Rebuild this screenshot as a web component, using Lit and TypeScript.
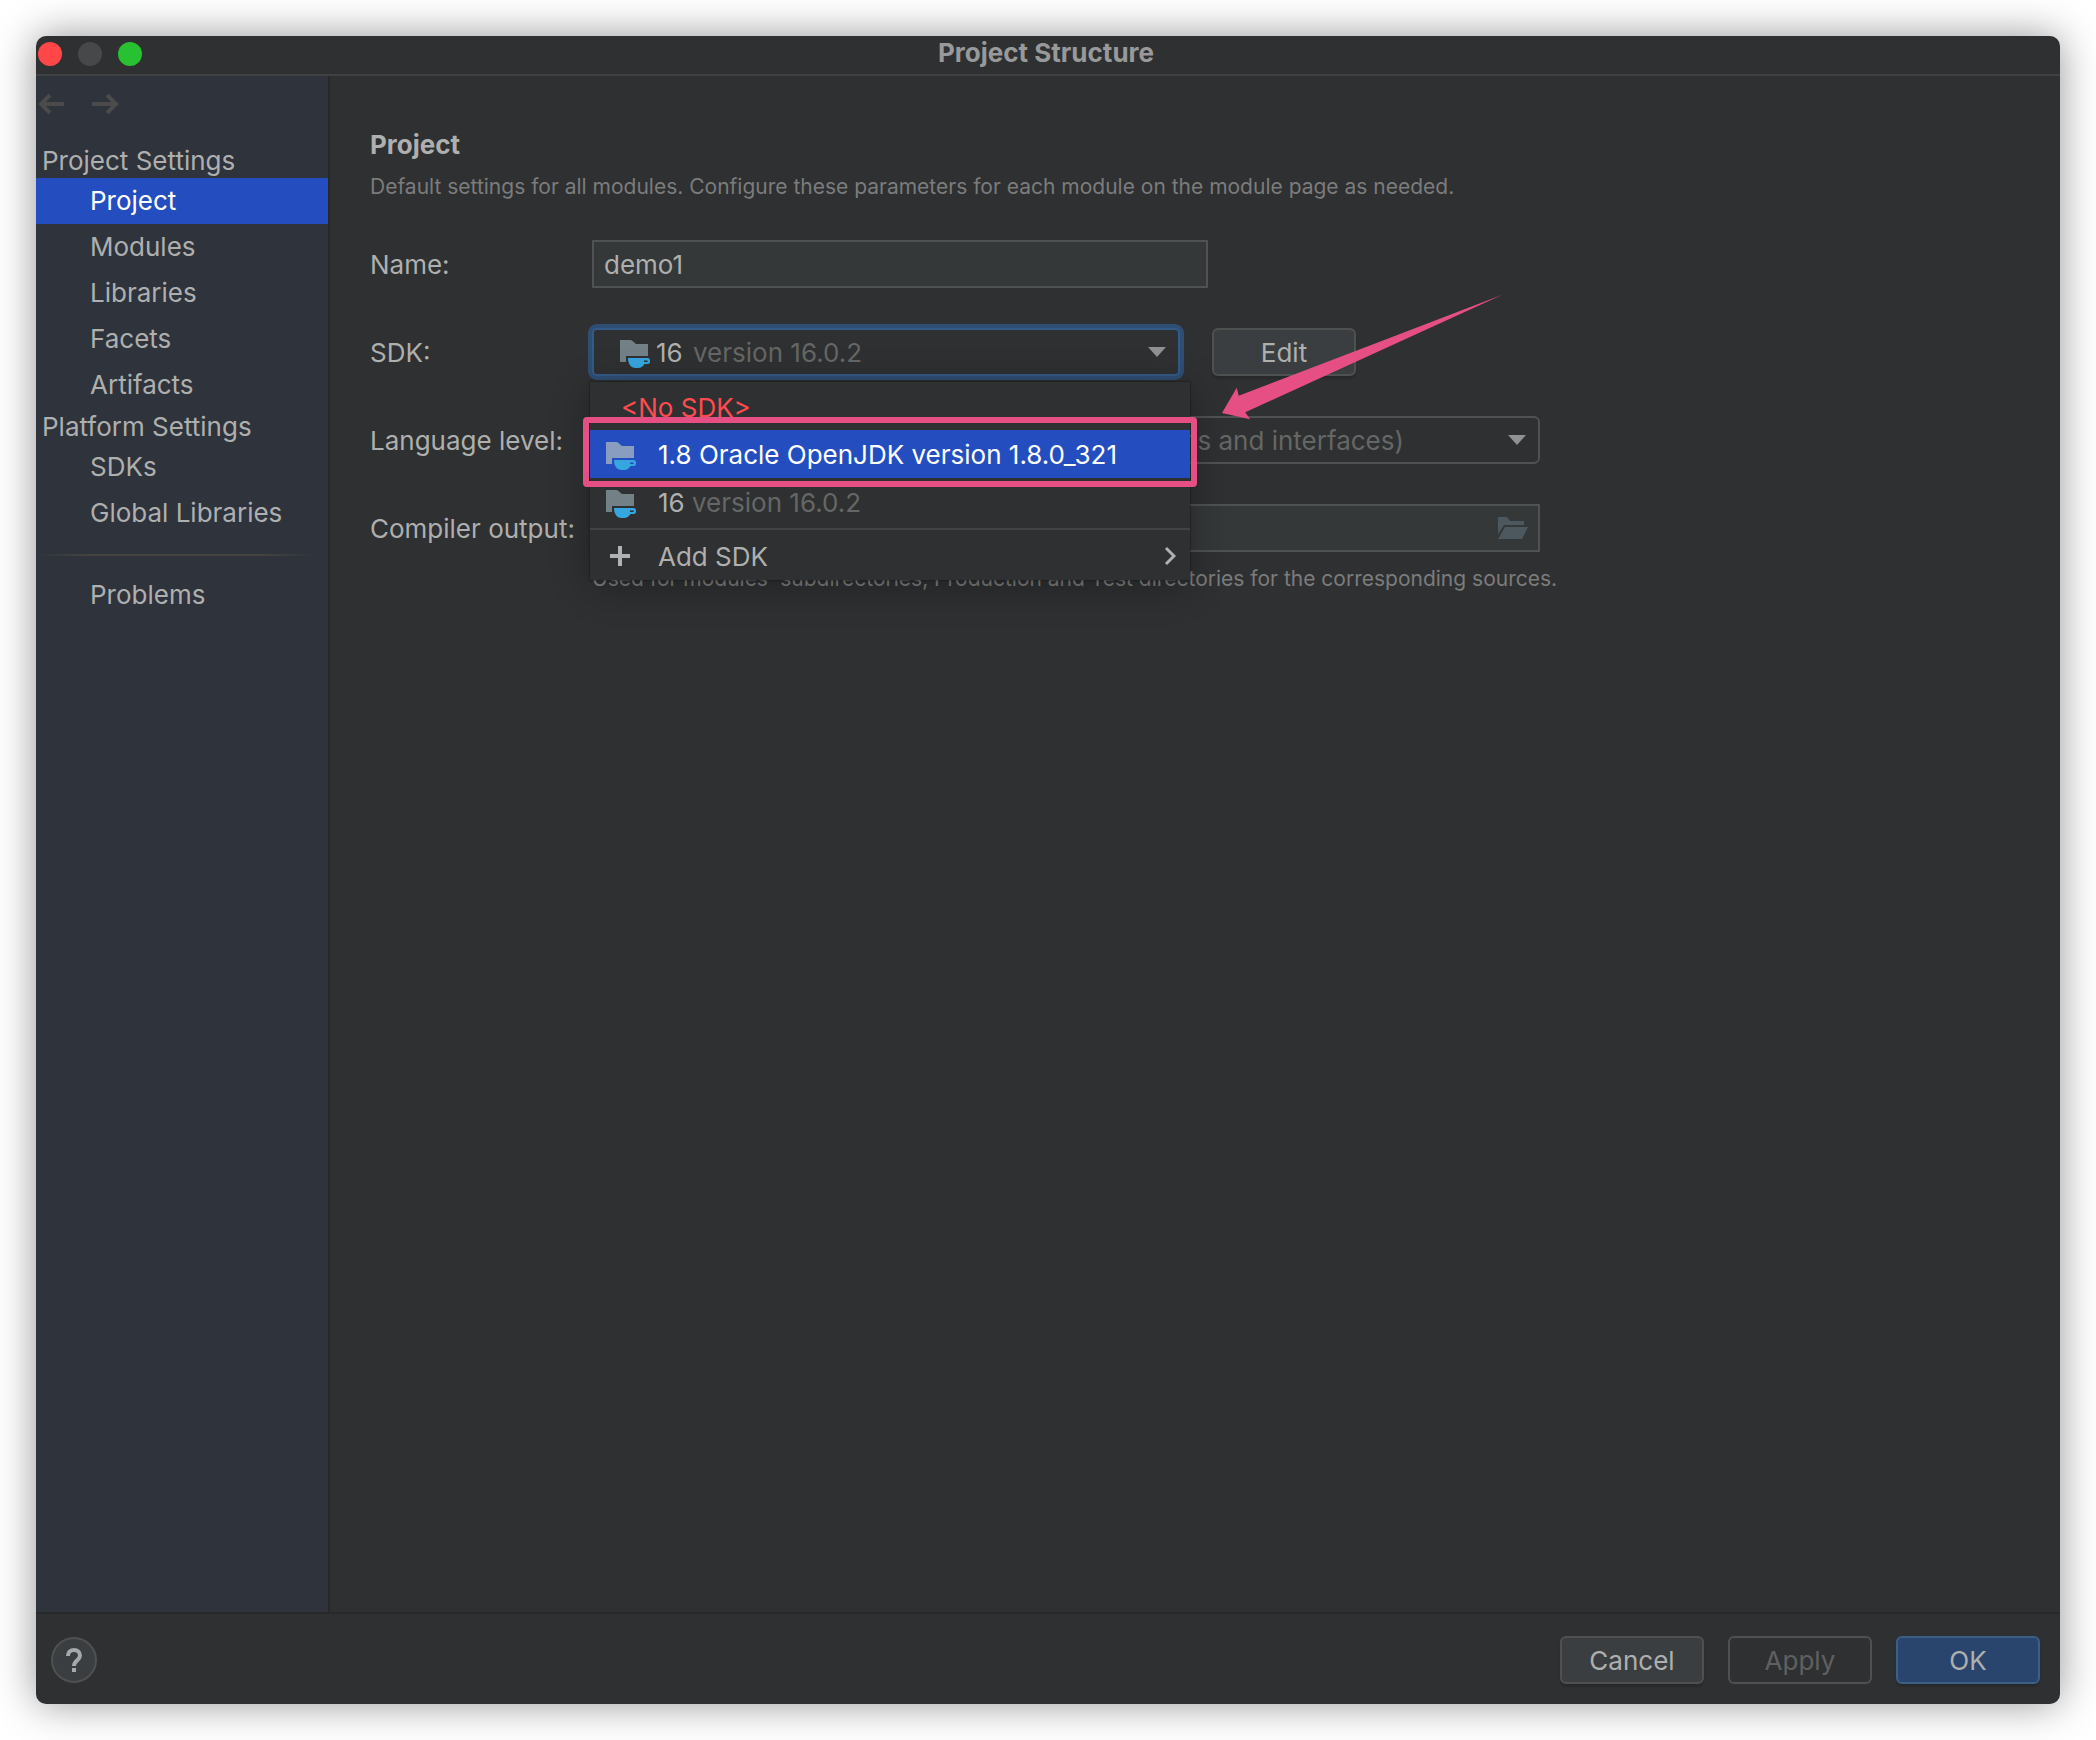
import { LitElement, html, css, svg } from "lit";
import { customElement, property, state } from "lit/decorators.js";
import { classMap } from "lit/directives/class-map.js";

@customElement("jdk-icon")
class JdkIcon extends LitElement {
  static styles = css`
    :host { display: block; width: 32px; height: 32px; flex: none; --folder: #738187; }
    svg { display: block; width: 100%; height: 100%; }
    .folder { fill: var(--folder); }
    .cup { fill: #36a6de; }
  `;
  render() {
    return html`<svg viewBox="0 0 32 32" aria-hidden="true">
      <path class="folder" d="M2 4H12Q13.5 4 14.5 5L18 8H30V20H8V26H2Z" />
      <path class="cup" fill-rule="evenodd" d="M10 22H30A2.5 2.5 0 0 1 32 24.5V25.5A2.5 2.5 0 0 1 29.5 28H26.5C25 30.8 22.5 32 20.5 32H17.5C13 32 10 28 10 22ZM26 24.5V26H29.6V24.5Z" />
    </svg>`;
  }
}

interface NavGroup {
  title: string;
  items: string[];
}

@customElement("settings-nav")
class SettingsNav extends LitElement {
  @state() private selected = "Project";

  private groups: NavGroup[] = [
    { title: "Project Settings", items: ["Project", "Modules", "Libraries", "Facets", "Artifacts"] },
    { title: "Platform Settings", items: ["SDKs", "Global Libraries"] },
  ];

  static styles = css`
    :host { display: block; background: #2f333c; border-right: 2px solid #282829; box-sizing: border-box; }
    .history { display: flex; gap: 26px; padding: 18px 0 28px 2px; }
    .history button { display: block; width: 28px; height: 20px; padding: 0; border: 0; background: none; }
    .history svg { display: block; fill: none; stroke: #4a4b4a; stroke-width: 4; }
    .title { margin: 0; padding: 2px 0 0 6px; font-size: 26px; font-weight: 400; line-height: 34px; height: 34px; }
    .item {
      display: block; width: 100%; height: 46px; padding: 0 0 0 54px; border: 0; background: none;
      color: inherit; font: inherit; text-align: left; line-height: 46px;
    }
    .item.selected { background: #244ebf; color: #fff; }
    .rule {
      height: 2px; margin: 18px 14px 16px 0; border: 0;
      background: linear-gradient(to right, transparent, #43433f 18%, #43433f 82%, transparent);
    }
  `;

  private item(name: string) {
    return html`<button class=${classMap({ item: true, selected: name === this.selected })}
      @click=${() => (this.selected = name)}>${name}</button>`;
  }

  render() {
    return html`
      <div class="history">
        <button aria-label="Back" disabled>
          <svg width="28" height="20" viewBox="0 0 28 20"><path d="M26 10H4M12 1L3 10L12 19" /></svg>
        </button>
        <button aria-label="Forward" disabled>
          <svg width="28" height="20" viewBox="0 0 28 20"><path d="M0 10H24M15 1L24 10L15 19" /></svg>
        </button>
      </div>
      <nav>
        ${this.groups.map((g) => html`<h2 class="title">${g.title}</h2>${g.items.map((i) => this.item(i))}`)}
        <hr class="rule" />
        ${this.item("Problems")}
      </nav>
    `;
  }
}

@customElement("sdk-popup")
class SdkPopup extends LitElement {
  static styles = css`
    :host {
      display: block; background: #2f3031; padding-top: 2px; box-sizing: border-box;
      box-shadow: 0 0 2px rgba(0, 0, 0, 0.6), 0 6px 36px rgba(0, 0, 0, 0.3);
    }
    .row {
      display: flex; align-items: center; gap: 22px; width: 100%; height: 48px; padding: 0 14px;
      border: 0; background: none; color: inherit; font: inherit; text-align: left; white-space: pre;
    }
    .text { padding-top: 2px; flex: 1; }
    .none { height: 46px; padding-left: 31px; color: #ff4b50; }
    .current { background: #244ebf; color: #fff; }
    .current jdk-icon { --folder: #899dc0; }
    .dim { color: #656766; }
    .rule { height: 2px; margin: 2px 0 0; border: 0; background: #424344; }
    .add { height: 50px; padding-top: 2px; }
    .add svg { display: block; fill: none; stroke: #afb1b3; stroke-width: 4; }
    .add .chevron { stroke-width: 3; }
    .frame {
      position: absolute; top: 35px; left: -7px; right: -7px; height: 70px; box-sizing: border-box;
      border: 6px solid #e64f83; border-radius: 4px; pointer-events: none;
    }
  `;
  render() {
    return html`
      <div role="listbox" aria-label="SDK list">
        <button class="row none" role="option"><span class="text">&lt;No SDK&gt;</span></button>
        <button class="row current" role="option" aria-selected="true"><jdk-icon></jdk-icon><span class="text">1.8 Oracle OpenJDK version 1.8.0_321</span></button>
        <button class="row" role="option"><jdk-icon></jdk-icon><span class="text">16 <span class="dim">version 16.0.2</span></span></button>
      </div>
      <hr class="rule" />
      <button class="row add">
        <svg width="32" height="32" viewBox="0 0 32 32" aria-hidden="true"><path d="M6 16H26M16 6V26" /></svg>
        <span class="text">Add SDK</span>
        <svg class="chevron" width="12" height="20" viewBox="0 0 12 20" aria-hidden="true"><path d="M2 2L10 10L2 18" /></svg>
      </button>
      <div class="frame"></div>
    `;
  }
}

@customElement("project-page")
class ProjectPage extends LitElement {
  @state() private name = "demo1";

  static styles = css`
    :host { display: block; padding: 53px 40px 40px; box-sizing: border-box; }
    h1 { margin: 0; font-size: 26px; line-height: 32px; font-weight: 700; }
    p { margin: 0; font-size: 21px; line-height: 28px; color: #7b7c7c; white-space: nowrap; }
    .intro { padding: 12px 0 39px; }
    .form { display: grid; grid-template-columns: 222px minmax(0, 948px); row-gap: 40px; align-items: center; }
    label { white-space: nowrap; padding-top: 2px; }
    .box {
      box-sizing: border-box; height: 48px; margin: 0; border: 2px solid #505152; background: #353839;
      color: inherit; font: inherit; outline: none; width: 100%;
    }
    .name { max-width: 616px; padding: 0 10px; }
    .sdk { display: flex; gap: 32px; position: relative; }
    .combo { display: grid; align-items: center; }
    .combo > * { grid-area: 1 / 1; }
    .combo.focus { width: 588px; }
    select.box { appearance: none; background: #2f3031; border-radius: 6px; padding: 2px 0 0; }
    .focus select.box {
      border-color: #345a87; border-radius: 5px; box-shadow: 0 0 0 4px #2f4e74; padding-left: 62px;
    }
    .adorn { display: flex; align-items: center; padding: 0 14px 0 26px; pointer-events: none; }
    .version { color: #656766; padding: 2px 0 0 43px; flex: 1; }
    .caret { display: block; fill: #8f9194; }
    .level .adorn { justify-content: flex-end; }
    .level select.box { color: #656766; padding: 2px 134px 0 10px; text-align: right; text-align-last: right; }
    .edit {
      width: 144px; height: 48px; padding: 2px 0 0; border: 2px solid #4f5151; border-radius: 6px; flex: none;
      background: #3b3e40; color: inherit; font: inherit; box-shadow: 0 3px 2px rgba(0, 0, 0, 0.15);
    }
    sdk-popup { position: absolute; z-index: 2; top: 54px; left: -2px; width: 600px; }
    .pointer { position: absolute; z-index: 3; left: 629px; top: -34px; fill: #e64f83; pointer-events: none; }
    .output { display: grid; align-items: center; }
    .output > * { grid-area: 1 / 1; }
    .browse { justify-self: end; width: 32px; height: 32px; margin-right: 12px; padding: 0; border: 0; background: none; }
    .browse svg { display: block; fill: #4d585e; }
    .hint { grid-column: 2; margin-top: -27px; }
  `;

  private caret() {
    return html`<svg class="caret" width="18" height="10" viewBox="0 0 18 10" aria-hidden="true">${svg`<path d="M0 0H18L9 10Z" />`}</svg>`;
  }

  render() {
    return html`
      <h1>Project</h1>
      <p class="intro">Default settings for all modules. Configure these parameters for each module on the module page as needed.</p>
      <div class="form">
        <label for="name">Name:</label>
        <input id="name" class="box name" .value=${this.name}
          @input=${(e: Event) => (this.name = (e.target as HTMLInputElement).value)} />

        <label for="sdk">SDK:</label>
        <div class="sdk">
          <div class="combo focus">
            <select id="sdk" class="box"><option>16</option></select>
            <span class="adorn"><jdk-icon></jdk-icon><span class="version">version 16.0.2</span>${this.caret()}</span>
          </div>
          <button class="edit">Edit</button>
          <sdk-popup></sdk-popup>
          <svg class="pointer" width="282" height="128" viewBox="1221 294 282 128" aria-hidden="true">
            <path d="M1503 294.500L1238.700 395.700L1236.700 387.700L1222 413L1250 419.300L1245.300 412.300Z" />
          </svg>
        </div>

        <label for="level">Language level:</label>
        <div class="combo level">
          <select id="level" class="box"><option>SDK default (16 - Records, patterns, local enums and interfaces)</option></select>
          <span class="adorn">${this.caret()}</span>
        </div>

        <label for="output">Compiler output:</label>
        <div class="output">
          <input id="output" class="box" />
          <button class="browse" aria-label="Browse">
            <svg width="32" height="32" viewBox="0 0 32 32"><path d="M2 5H11L14 9H28V13H8L2 22ZM9 15H32L26 27H2Z" /></svg>
          </button>
        </div>
        <p class="hint">Used for modules' subdirectories, Production and Test directories for the corresponding sources.</p>
      </div>
    `;
  }
}

@customElement("dialog-button")
class DialogButton extends LitElement {
  @property() kind = "plain";
  @property({ type: Boolean }) disabled = false;

  static styles = css`
    button {
      display: block; width: 144px; height: 48px; padding: 2px 0 0; border: 2px solid #4f5151; border-radius: 6px;
      background: #3b3e40; color: inherit; font: inherit; box-shadow: 0 3px 2px rgba(0, 0, 0, 0.15);
    }
    button:disabled { background: none; color: #5f6060; box-shadow: none; }
    .primary { background: #29456d; border-color: #3c5f85; }
  `;
  render() {
    return html`<button class=${this.kind} ?disabled=${this.disabled}><slot></slot></button>`;
  }
}

@customElement("app-root")
class AppRoot extends LitElement {
  static styles = css`
    :host {
      display: flex; box-sizing: border-box; min-height: 100vh; padding: 36px; background: #fff;
      font-family: Inter, "Liberation Sans", sans-serif; font-size: 26px; line-height: 32px; color: #aeafaf;
    }
    .window {
      flex: 1; display: flex; flex-direction: column; min-width: 0; overflow: visible;
      background: #2f3031; border-radius: 10px; box-shadow: 0 0 40px rgba(0, 0, 0, 0.42);
    }
    .titlebar {
      display: grid; grid-template-columns: 1fr auto 1fr; align-items: center; height: 40px; box-sizing: border-box;
      padding: 0 6px 2px 2px; border-bottom: 2px solid #3f4142;
    }
    .lights { display: flex; gap: 16px; }
    .light { width: 24px; height: 24px; padding: 0; border: 0; border-radius: 50%; background: #474849; }
    .close { background: #ff4747; }
    .zoom { background: #28c131; }
    .title { font-weight: 700; color: #98999a; line-height: 30px; margin-bottom: 2px; }
    .body { flex: 1; display: flex; }
    settings-nav { width: 294px; flex: none; }
    project-page { flex: 1; min-width: 0; }
    .footer {
      display: flex; align-items: center; gap: 24px; height: 92px; box-sizing: border-box;
      padding: 2px 20px 0 15px; border-top: 2px solid #272829;
    }
    .help {
      width: 46px; height: 46px; padding: 0; border: 2px solid #4f5151; border-radius: 50%;
      background: #3b3e40; margin-right: auto;
    }
    .help svg { display: block; margin: auto; fill: none; stroke: #a6a8aa; stroke-width: 4; }
    .help .dot { fill: #a6a8aa; stroke: none; }
  `;
  render() {
    return html`
      <main class="window">
        <header class="titlebar">
          <div class="lights">
            <button class="light close" aria-label="Close"></button>
            <button class="light" aria-label="Minimize" disabled></button>
            <button class="light zoom" aria-label="Zoom"></button>
          </div>
          <span class="title">Project Structure</span>
        </header>
        <div class="body">
          <settings-nav></settings-nav>
          <project-page></project-page>
        </div>
        <footer class="footer">
          <button class="help" aria-label="Help">
            <svg width="20" height="26" viewBox="0 0 20 26">
              <path d="M4 9V8.500C4 5 6.500 3 10 3S16 5 16 8.500C16 13 10 13.500 10 19" />
              <path class="dot" d="M8 21H12V25H8Z" />
            </svg>
          </button>
          <dialog-button>Cancel</dialog-button>
          <dialog-button disabled>Apply</dialog-button>
          <dialog-button kind="primary">OK</dialog-button>
        </footer>
      </main>
    `;
  }
}
